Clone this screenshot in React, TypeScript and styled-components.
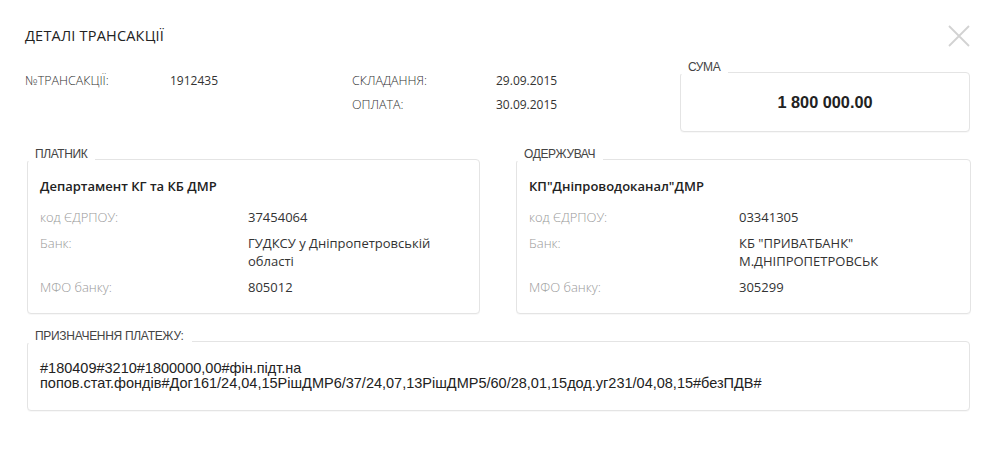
import React from "react";
import styled, { createGlobalStyle } from "styled-components";

const GlobalStyle = createGlobalStyle`
  html, body {
    margin: 0;
    padding: 0;
    background: #fff;
  }
  body {
    font-family: "Open Sans", "Liberation Sans", sans-serif;
    color: #333;
  }
`;

const Page = styled.div`
  width: 994px;
  height: 461px;
  box-sizing: border-box;
  padding: 26px 24px 0 25px;
`;

const Header = styled.div`
  display: flex;
  align-items: center;
  justify-content: space-between;
  height: 20px;
`;

const Title = styled.h1`
  margin: 0;
  font-size: 14.5px;
  line-height: 20px;
  font-weight: 400;
  color: #222;
  letter-spacing: 0.2px;
`;

const CloseButton = styled.button`
  width: 24px;
  height: 24px;
  padding: 0;
  margin-right: -1px;
  border: none;
  background: none;
  cursor: pointer;
  display: flex;
  align-items: center;
  justify-content: center;
`;

const TopSection = styled.div`
  display: flex;
  align-items: flex-start;
  margin-top: 22px;
`;

const InfoGrid = styled.div`
  display: grid;
  grid-template-columns: 145px 182px 144px 1fr;
  grid-auto-rows: 24px;
  align-items: center;
  flex: 1;
`;

const InfoLabel = styled.span`
  font-size: 12.5px;
  font-weight: 300;
  color: #333;
`;

const InfoValue = styled.span`
  font-size: 12px;
  color: #333;
`;

const Card = styled.div`
  position: relative;
  box-sizing: border-box;
  border: 1px solid #e4e4e4;
  border-radius: 4px;
  background: #fff;
  box-shadow: 0 1px 1px rgba(0, 0, 0, 0.03);
`;

const Legend = styled.span<{ $tight?: boolean }>`
  position: absolute;
  top: -13px;
  left: -1px;
  padding: 0 8px;
  background: #fff;
  font-family: "Liberation Sans", Arial, sans-serif;
  font-size: 12px;
  line-height: 14px;
  color: #444;
  letter-spacing: ${({ $tight }) => ($tight ? "-0.3px" : "-0.4px")};
`;

const SumCard = styled(Card)`
  width: 290px;
  height: 60px;
  margin-top: 4px;
  display: flex;
  align-items: center;
  justify-content: center;
`;

const SumValue = styled.span`
  font-family: "Liberation Sans", Arial, sans-serif;
  font-weight: 700;
  font-size: 16.3px;
  color: #222;
`;

const Parties = styled.div`
  display: grid;
  grid-template-columns: 453px 455px;
  column-gap: 36px;
  margin: 27px 0 0 2px;
`;

const PartyCard = styled(Card)`
  padding: 17px 12px 17px 12px;
  display: flex;
  flex-direction: column;
`;

const PartyName = styled.div`
  font-size: 13px;
  line-height: 18px;
  font-weight: 600;
  color: #222;
  margin-bottom: 13px;
`;

const Rows = styled.div<{ $labelWidth: number }>`
  display: grid;
  grid-template-columns: ${({ $labelWidth }) => $labelWidth}px 1fr;
  row-gap: 8px;
`;

const RowLabel = styled.span`
  font-size: 13px;
  line-height: 18px;
  font-weight: 300;
  color: #999;
`;

const RowValue = styled.span`
  font-size: 13px;
  line-height: 18px;
  color: #333;
  max-width: 230px;
`;

const PurposeCard = styled(Card)`
  margin: 27px 0 0 2px;
  padding: 19px 12px 19px 12px;
`;

const PurposeText = styled.p`
  margin: 0;
  font-family: "Liberation Sans", Arial, sans-serif;
  font-size: 14.5px;
  line-height: 15px;
  color: #222;
`;

type Party = {
  title: string;
  name: string;
  code: string;
  bank: string;
  mfo: string;
  labelWidth: number;
};

const parties: Party[] = [
  {
    title: "ПЛАТНИК",
    name: "Департамент КГ та КБ ДМР",
    code: "37454064",
    bank: "ГУДКСУ у Дніпропетровській області",
    mfo: "805012",
    labelWidth: 208
  },
  {
    title: "ОДЕРЖУВАЧ",
    name: "КП\"Дніпроводоканал\"ДМР",
    code: "03341305",
    bank: "КБ \"ПРИВАТБАНК\" М.ДНІПРОПЕТРОВСЬК",
    mfo: "305299",
    labelWidth: 210
  }
];

const CloseIcon = () => (
  <svg width="22" height="22" viewBox="0 0 22 22">
    <path d="M1 1L21 21M21 1L1 21" stroke="#d2d2d2" strokeWidth="1.8" fill="none" />
  </svg>
);

export default function App() {
  return (
    <Page>
      <GlobalStyle />
      <Header>
        <Title>ДЕТАЛІ ТРАНСАКЦІЇ</Title>
        <CloseButton aria-label="Закрити">
          <CloseIcon />
        </CloseButton>
      </Header>

      <TopSection>
        <InfoGrid>
          <InfoLabel>№ТРАНСАКЦІЇ:</InfoLabel>
          <InfoValue>1912435</InfoValue>
          <InfoLabel>СКЛАДАННЯ:</InfoLabel>
          <InfoValue>29.09.2015</InfoValue>
          <span />
          <span />
          <InfoLabel>ОПЛАТА:</InfoLabel>
          <InfoValue>30.09.2015</InfoValue>
        </InfoGrid>
        <SumCard>
          <Legend>СУМА</Legend>
          <SumValue>1 800 000.00</SumValue>
        </SumCard>
      </TopSection>

      <Parties>
        {parties.map(p => (
          <PartyCard key={p.title}>
            <Legend>{p.title}</Legend>
            <PartyName>{p.name}</PartyName>
            <Rows $labelWidth={p.labelWidth}>
              <RowLabel>код ЄДРПОУ:</RowLabel>
              <RowValue>{p.code}</RowValue>
              <RowLabel>Банк:</RowLabel>
              <RowValue>{p.bank}</RowValue>
              <RowLabel>МФО банку:</RowLabel>
              <RowValue>{p.mfo}</RowValue>
            </Rows>
          </PartyCard>
        ))}
      </Parties>

      <PurposeCard>
        <Legend $tight>ПРИЗНАЧЕННЯ ПЛАТЕЖУ:</Legend>
        <PurposeText>
          #180409#3210#1800000,00#фін.підт.на
          попов.стат.фондів#Дог161/24,04,15РішДМР6/37/24,07,13РішДМР5/60/28,01,15дод.уг231/04,08,15#безПДВ#
        </PurposeText>
      </PurposeCard>
    </Page>
  );
}
